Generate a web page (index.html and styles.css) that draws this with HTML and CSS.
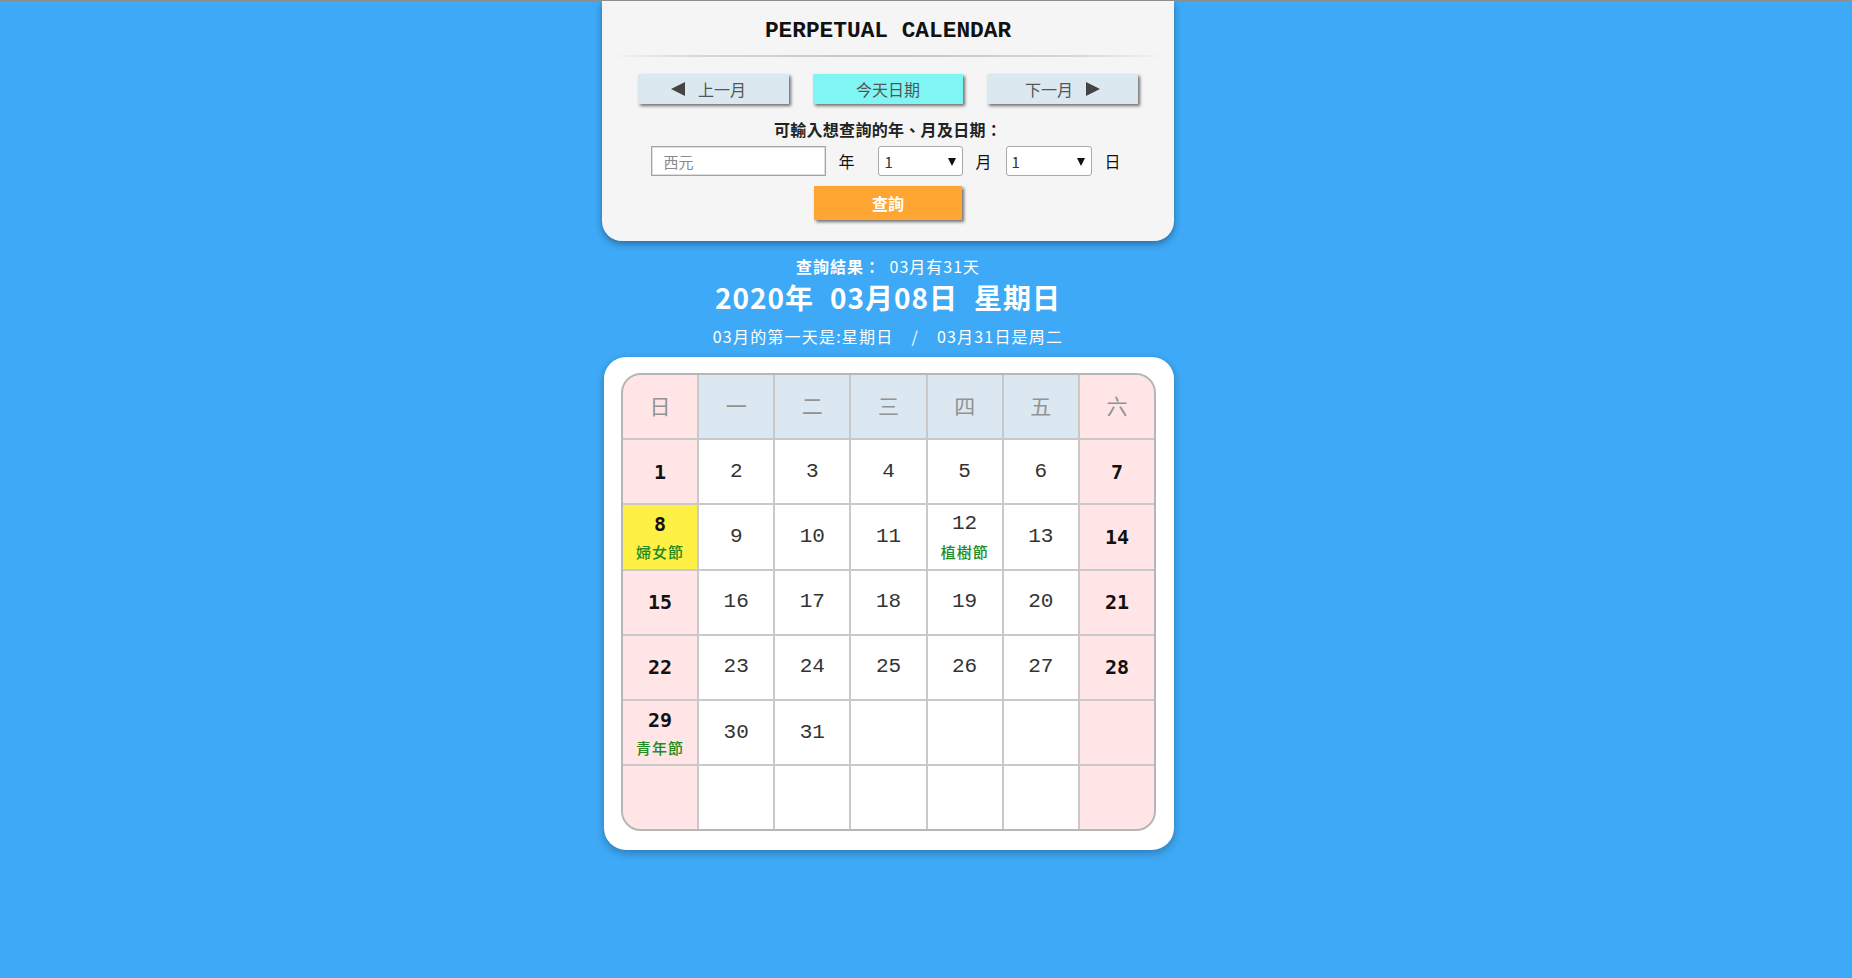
FILE: index.html
```html
<!DOCTYPE html>
<html lang="zh-Hant">
<head>
<meta charset="utf-8">
<title>Perpetual Calendar</title>
<link rel="stylesheet" href="styles.css">
</head>
<body>
<div class="page">
  <section class="panel">
    <h1 class="title">PERPETUAL CALENDAR</h1>
    <div class="divider"></div>
    <div class="nav">
      <button class="btn nav-btn prev"><svg class="tri" viewBox="0 0 14 14" width="14" height="14"><polygon points="14,0 14,14 0,7"/></svg><span>上一月</span></button>
      <button class="btn nav-btn today-btn">今天日期</button>
      <button class="btn nav-btn next"><span>下一月</span><svg class="tri" viewBox="0 0 14 14" width="14" height="14"><polygon points="0,0 0,14 14,7"/></svg></button>
    </div>
    <p class="hint">可輸入想查詢的年、月及日期：</p>
    <div class="form-row">
      <input class="year" type="text" placeholder="西元">
      <span class="unit u-year">年</span>
      <span class="sel-wrap sel-month"><select class="sel"><option>1</option></select></span>
      <span class="unit u-month">月</span>
      <span class="sel-wrap sel-day"><select class="sel"><option>1</option></select></span>
      <span class="unit u-day">日</span>
    </div>
    <button class="btn query">查詢</button>
  </section>

  <div class="result">
    <p class="r1"><b>查詢結果：</b> 03月有31天</p>
    <p class="r2"><span>2020年</span><span>03月08日</span><span>星期日</span></p>
    <p class="r3"><span>03月的第一天是:星期日</span><span class="slash">/</span><span>03月31日是周二</span></p>
  </div>

  <section class="calendar">
    <div class="grid">
      <div class="cell hd we">日</div>
      <div class="cell hd">一</div>
      <div class="cell hd">二</div>
      <div class="cell hd">三</div>
      <div class="cell hd">四</div>
      <div class="cell hd">五</div>
      <div class="cell hd we">六</div>

      <div class="cell we"><span class="num">1</span></div>
      <div class="cell"><span class="num">2</span></div>
      <div class="cell"><span class="num">3</span></div>
      <div class="cell"><span class="num">4</span></div>
      <div class="cell"><span class="num">5</span></div>
      <div class="cell"><span class="num">6</span></div>
      <div class="cell we"><span class="num">7</span></div>

      <div class="cell we today"><span class="num">8</span><span class="hol">婦女節</span></div>
      <div class="cell"><span class="num">9</span></div>
      <div class="cell"><span class="num">10</span></div>
      <div class="cell"><span class="num">11</span></div>
      <div class="cell"><span class="num">12</span><span class="hol">植樹節</span></div>
      <div class="cell"><span class="num">13</span></div>
      <div class="cell we"><span class="num">14</span></div>

      <div class="cell we"><span class="num">15</span></div>
      <div class="cell"><span class="num">16</span></div>
      <div class="cell"><span class="num">17</span></div>
      <div class="cell"><span class="num">18</span></div>
      <div class="cell"><span class="num">19</span></div>
      <div class="cell"><span class="num">20</span></div>
      <div class="cell we"><span class="num">21</span></div>

      <div class="cell we"><span class="num">22</span></div>
      <div class="cell"><span class="num">23</span></div>
      <div class="cell"><span class="num">24</span></div>
      <div class="cell"><span class="num">25</span></div>
      <div class="cell"><span class="num">26</span></div>
      <div class="cell"><span class="num">27</span></div>
      <div class="cell we"><span class="num">28</span></div>

      <div class="cell we"><span class="num">29</span><span class="hol">青年節</span></div>
      <div class="cell"><span class="num">30</span></div>
      <div class="cell"><span class="num">31</span></div>
      <div class="cell"></div>
      <div class="cell"></div>
      <div class="cell"></div>
      <div class="cell we"></div>

      <div class="cell we"></div>
      <div class="cell"></div>
      <div class="cell"></div>
      <div class="cell"></div>
      <div class="cell"></div>
      <div class="cell"></div>
      <div class="cell we"></div>
    </div>
  </section>
</div>
</body>
</html>
```

FILE: styles.css
```css
* { box-sizing: border-box; }

html, body { height: 100%; }

body {
  margin: 0;
  background: #3ea9f6;
  border-top: 1px solid #8d8d8d;
  font-family: "Noto Sans CJK TC", "Noto Sans", sans-serif;
  color: #222;
}

.page {
  width: 572px;
  margin-left: calc(50% - 324px);
}

/* ---------- top panel ---------- */
.panel {
  background: #f5f5f5;
  border-radius: 0 0 20px 20px;
  box-shadow: 0 3px 7px rgba(0, 0, 0, 0.35);
  padding: 0 0 21px;
  display: flex;
  flex-direction: column;
  align-items: center;
}

.title {
  margin: 0;
  padding-top: 15px;
  font-family: "Courier New", "Nimbus Mono PS", "Nimbus Mono L", "FreeMono", "Liberation Mono", monospace;
  font-weight: bold;
  font-size: 22.8px;
  line-height: 30px;
  color: #111;
  white-space: pre;
}

.divider {
  align-self: stretch;
  margin: 9px 8px 0;
  height: 2px;
  background: linear-gradient(to right, rgba(200,200,200,0), #d8d8d8 15%, #c4c4c4 50%, #d8d8d8 85%, rgba(200,200,200,0));
}

.nav {
  margin-top: 17px;
  display: flex;
  gap: 24px;
}

.btn {
  border: none;
  padding: 0;
  height: 30px;
  box-shadow: 2px 2px 3px rgba(0, 0, 0, 0.55);
  font-family: "Noto Sans CJK TC", "Noto Sans", sans-serif;
  font-size: 16px;
  color: #555;
  display: flex;
  align-items: center;
  justify-content: center;
}

.nav-btn { width: 151px; background: #dbe8f0; gap: 13px; }
.nav-btn.prev { padding-right: 10px; }
.today-btn { width: 150px; background: #80f6f4; }
.tri { fill: #444; display: block; }

.hint {
  margin: 15px 0 0;
  font-size: 16px;
  line-height: 20px;
  font-weight: bold;
  letter-spacing: 0.3px;
  color: #222;
}

.form-row {
  margin: 7px 4px 0 0;
  height: 30px;
  display: flex;
  align-items: center;
}

.year {
  width: 175px;
  height: 30px;
  border: 1px solid #a4a4a4;
  box-shadow: inset 0 0 0 1px #dedede;
  background: #fff;
  padding: 0 0 0 11px;
  font-family: "Noto Sans CJK TC", "Noto Sans", sans-serif;
  font-size: 15px;
  color: #333;
  outline: none;
}
.year::placeholder { color: #8a8a8a; }

.unit {
  font-size: 16px;
  color: #111;
  line-height: 20px;
}
.u-year { margin: 0 24px 0 12px; }
.u-month { margin: 0 14px 0 12px; }
.u-day { margin: 0 0 0 13px; }

.sel-wrap {
  position: relative;
  display: block;
  height: 30px;
}
.sel-month { width: 85px; }
.sel-day { width: 86px; }

.sel {
  -webkit-appearance: none;
  appearance: none;
  width: 100%;
  height: 30px;
  border: 1px solid #a8a8a8;
  border-radius: 3px;
  background: #fff;
  padding: 0 0 0 5px;
  font-family: "Noto Sans CJK TC", "Noto Sans", sans-serif;
  font-size: 15px;
  color: #333;
  outline: none;
}

.sel-wrap::after {
  content: "";
  position: absolute;
  right: 7px;
  top: 12px;
  border-left: 4px solid transparent;
  border-right: 4px solid transparent;
  border-top: 8px solid #111;
  pointer-events: none;
}

.query {
  margin-top: 10px;
  width: 148px;
  height: 34px;
  background: #ffa531;
  color: #fff;
  font-weight: bold;
  font-size: 16px;
}

/* ---------- result text ---------- */
.result {
  padding-top: 14px;
  text-align: center;
  color: #fff;
  letter-spacing: 1px;
}
.result p { margin: 0; }

.r1 {
  font-size: 16px;
  line-height: 22px;
}
.r1 b { margin-right: 4px; }

.r2 {
  margin-top: 2px !important;
  font-size: 28px;
  line-height: 36px;
  font-weight: bold;
  display: flex;
  justify-content: center;
  gap: 16px;
}

.r3 {
  margin-top: 10px !important;
  font-size: 16px;
  line-height: 22px;
  letter-spacing: 1.2px;
  display: flex;
  justify-content: center;
  gap: 18px;
}

/* ---------- calendar ---------- */
.calendar {
  margin: 10px 0 0 2px;
  width: 570px;
  background: #fff;
  border-radius: 22px;
  box-shadow: 0 3px 8px rgba(0, 0, 0, 0.28);
  padding: 16px 17px 19px;
}

.grid {
  width: 535px;
  border: 2px solid #b6b6b6;
  border-radius: 20px;
  overflow: hidden;
  display: grid;
  grid-template-columns: repeat(7, 1fr);
  grid-auto-rows: 63.2px;
  gap: 2px;
  background: #c9c9c9;
}

.cell {
  background: #fff;
  display: flex;
  flex-direction: column;
  align-items: center;
  justify-content: center;
}
.cell.we { background: #ffe5e5; }
.cell.today { background: #fff046; }

.cell.hd {
  background: #dbe8f1;
  color: #929292;
  font-size: 21px;
  padding-bottom: 3px;
}
.cell.hd.we { background: #ffe5e5; }

.num {
  font-family: "Courier New", "Nimbus Mono PS", "Nimbus Mono L", "FreeMono", "Liberation Mono", monospace;
  font-size: 21px;
  line-height: 24px;
  color: #333;
}

.cell.we .num {
  font-family: "DejaVu Sans Mono", monospace;
  font-weight: bold;
  font-size: 20px;
  color: #111;
}

.hol {
  margin-top: 6px;
  font-size: 15px;
  line-height: 20px;
  letter-spacing: 1px;
  color: #228b22;
  font-weight: 500;
}
```
